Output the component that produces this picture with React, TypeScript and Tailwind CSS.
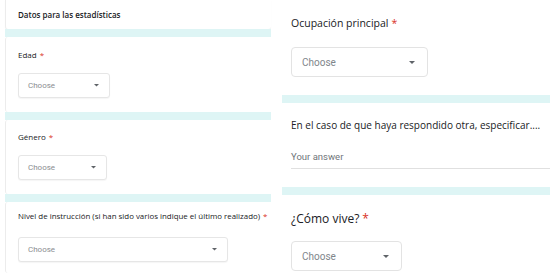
import React from "react";

const Caret = ({ size = 5 }: { size?: number }) => (
  <svg width={size * 2} height={size} viewBox="0 0 10 5" className="shrink-0">
    <path d="M0 0 L10 0 L5 5 Z" fill="#5f6368" />
  </svg>
);

function SmallSelect({ w }: { w: string }) {
  return (
    <div
      className={`${w} h-[25px] flex items-center justify-between pl-[9px] pr-[10px] border border-[#e6e6e6] rounded-[3px] bg-white shadow-[0_1px_1px_rgba(0,0,0,0.04)]`}
    >
      <span className="text-[8px] text-[#8a8d91]" style={{ fontFamily: "Roboto, sans-serif" }}>
        Choose
      </span>
      <Caret size={2.5} />
    </div>
  );
}

function BigSelect({ w }: { w: string }) {
  return (
    <div
      className={`${w} h-[30px] flex items-center justify-between pl-[10px] pr-[12px] border border-[#e3e3e3] rounded-[4px] bg-white`}
    >
      <span className="text-[10px] text-[#80868b]" style={{ fontFamily: "Roboto, sans-serif" }}>
        Choose
      </span>
      <Caret size={3} />
    </div>
  );
}

const Star = () => <span className="text-[#d93025] ml-[3px]">*</span>;

export default function App() {
  return (
    <div
      className="w-[550px] h-[280px] bg-white flex overflow-hidden"
      style={{ fontFamily: "'Open Sans', sans-serif" }}
    >
      {/* Left panel */}
      <div className="w-[271px] pl-[5px] flex flex-col">
        <div className="h-[29px] bg-white rounded-b-[3px] shadow-[0_1px_1px_rgba(0,0,0,0.06)] border-l border-[#ececec] pl-[12px] flex items-center">
          <span className="text-[8px] font-semibold text-[#202124] leading-none">
            Datos para las estadísticas
          </span>
        </div>
        <div className="h-[8px] bg-[#def5f5]" />
        <div className="h-[75px] bg-white rounded-[3px] border-l border-[#ececec] pl-[12px] pt-[12px] flex flex-col">
          <div className="h-[12px] text-[8px] leading-[12px] text-[#202124]">
            Edad<Star />
          </div>
          <div className="mt-[12px]">
            <SmallSelect w="w-[92px]" />
          </div>
        </div>
        <div className="h-[8px] bg-[#def5f5]" />
        <div className="h-[74px] bg-white rounded-[3px] border-l border-[#ececec] pl-[12px] pt-[11px] flex flex-col">
          <div className="h-[12px] text-[8px] leading-[12px] text-[#202124]">
            Género<Star />
          </div>
          <div className="mt-[12px]">
            <SmallSelect w="w-[89px]" />
          </div>
        </div>
        <div className="h-[8px] bg-[#def5f5]" />
        <div className="h-[71px] bg-white rounded-[3px] border-l border-[#ececec] pl-[12px] pt-[8px] flex flex-col">
          <div className="h-[12px] text-[7.9px] leading-[12px] text-[#202124] whitespace-nowrap">
            Nivel de instrucción (si han sido varios indique el último realizado)<Star />
          </div>
          <div className="mt-[15px]">
            <SmallSelect w="w-[210px]" />
          </div>
        </div>
      </div>

      {/* Right panel */}
      <div className="flex-1 ml-[11px] flex flex-col">
        <div className="pl-[9px] pt-[15px] h-[95px]">
          <div className="h-[16px] text-[10.5px] leading-[16px] text-[#202124]">
            Ocupación principal<Star />
          </div>
          <div className="mt-[16px]">
            <BigSelect w="w-[137px]" />
          </div>
        </div>
        <div className="h-[8px] bg-[#def5f5]" />
        <div className="pl-[9px] pt-[14px] h-[84px]">
          <div className="h-[16px] text-[10px] leading-[16px] text-[#202124] whitespace-nowrap">
            En el caso de que haya respondido otra, especificar....
          </div>
          <div className="mt-[14px] h-[22px] border-b border-[#e0e0e0] flex items-center">
            <span className="text-[9.5px] text-[#70757a]" style={{ fontFamily: "Roboto, sans-serif" }}>
              Your answer
            </span>
          </div>
        </div>
        <div className="h-[8px] bg-[#def5f5]" />
        <div className="pl-[9px] pt-[16px]">
          <div className="h-[16px] text-[12px] leading-[16px] text-[#202124]">
            ¿Cómo vive?<Star />
          </div>
          <div className="mt-[14px]">
            <BigSelect w="w-[111px]" />
          </div>
        </div>
      </div>
    </div>
  );
}
